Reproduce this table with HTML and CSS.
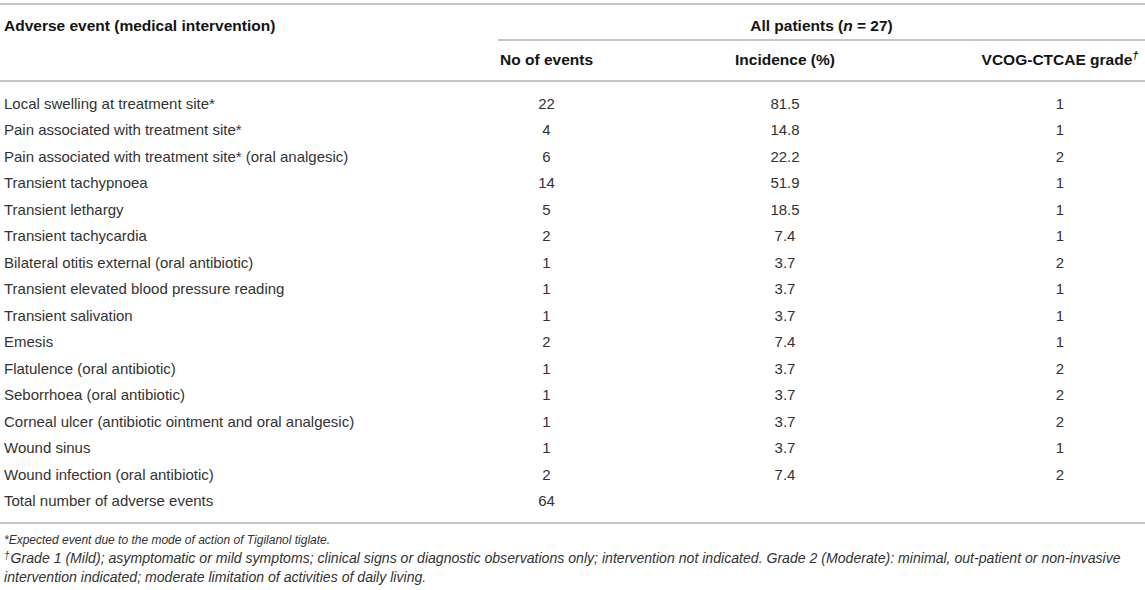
FILE: index.html
```html
<!DOCTYPE html>
<html lang="en">
<head>
<meta charset="utf-8">
<title>Adverse events</title>
<link rel="stylesheet" href="styles.css">
</head>
<body>
<div class="wrap">
<table class="ae">
  <colgroup>
    <col class="c1"><col class="c2"><col class="c3"><col class="c4">
  </colgroup>
  <thead>
    <tr>
      <th class="h-first" rowspan="2">Adverse event (medical intervention)</th>
      <th class="h-group" colspan="3">All patients (<i>n</i> = 27)</th>
    </tr>
    <tr class="h-sub">
      <th>No of events</th>
      <th>Incidence (%)</th>
      <th>VCOG-CTCAE grade<sup class="dag">†</sup></th>
    </tr>
  </thead>
  <tbody>
    <tr><td>Local swelling at treatment site*</td><td>22</td><td>81.5</td><td>1</td></tr>
    <tr><td>Pain associated with treatment site*</td><td>4</td><td>14.8</td><td>1</td></tr>
    <tr><td>Pain associated with treatment site* (oral analgesic)</td><td>6</td><td>22.2</td><td>2</td></tr>
    <tr><td>Transient tachypnoea</td><td>14</td><td>51.9</td><td>1</td></tr>
    <tr><td>Transient lethargy</td><td>5</td><td>18.5</td><td>1</td></tr>
    <tr><td>Transient tachycardia</td><td>2</td><td>7.4</td><td>1</td></tr>
    <tr><td>Bilateral otitis external (oral antibiotic)</td><td>1</td><td>3.7</td><td>2</td></tr>
    <tr><td>Transient elevated blood pressure reading</td><td>1</td><td>3.7</td><td>1</td></tr>
    <tr><td>Transient salivation</td><td>1</td><td>3.7</td><td>1</td></tr>
    <tr><td>Emesis</td><td>2</td><td>7.4</td><td>1</td></tr>
    <tr><td>Flatulence (oral antibiotic)</td><td>1</td><td>3.7</td><td>2</td></tr>
    <tr><td>Seborrhoea (oral antibiotic)</td><td>1</td><td>3.7</td><td>2</td></tr>
    <tr><td>Corneal ulcer (antibiotic ointment and oral analgesic)</td><td>1</td><td>3.7</td><td>2</td></tr>
    <tr><td>Wound sinus</td><td>1</td><td>3.7</td><td>1</td></tr>
    <tr><td>Wound infection (oral antibiotic)</td><td>2</td><td>7.4</td><td>2</td></tr>
    <tr><td>Total number of adverse events</td><td>64</td><td></td><td></td></tr>
  </tbody>
</table>
<div class="notes">
  <p class="n1">*Expected event due to the mode of action of Tigilanol tiglate.</p>
  <p class="n2"><sup class="fdag">†</sup>Grade 1 (Mild); asymptomatic or mild symptoms; clinical signs or diagnostic observations only; intervention not indicated. Grade 2 (Moderate): minimal, out-patient or non-invasive intervention indicated; moderate limitation of activities of daily living.</p>
</div>
</div>
</body>
</html>
```

FILE: styles.css
```css
html, body {
  margin: 0;
  padding: 0;
  background: #ffffff;
}

body {
  font-family: "Liberation Sans", Arial, Helvetica, sans-serif;
  color: #333333;
}

.wrap {
  width: 1145px;
  padding-top: 3px;
}

.ae {
  width: 1145px;
  border-collapse: separate;
  border-spacing: 0;
  table-layout: fixed;
  font-size: 15px;
}

.c1 { width: 498px; }
.c2 { width: 97px; }
.c3 { width: 380px; }
.c4 { width: 170px; }

.ae th {
  font-weight: bold;
  font-size: 15.5px;
  color: #141414;
  line-height: 18px;
  text-align: center;
  padding: 0;
  white-space: nowrap;
}

.ae .h-first {
  text-align: left;
  vertical-align: top;
  padding: 12px 0 0 4px;
  border-top: 2px solid #c6c6c6;
  border-bottom: 2px solid #c6c6c6;
}

.ae .h-group {
  padding: 12px 0 4px 0;
  border-top: 2px solid #c6c6c6;
  border-bottom: 2px solid #c6c6c6;
}

.ae .h-sub th {
  padding: 10px 0 11px 0;
  border-bottom: 2px solid #c6c6c6;
}

.dag {
  font-style: italic;
  font-size: 11px;
  line-height: 0;
  vertical-align: 6px;
}

.ae td {
  line-height: 26.47px;
  padding: 0;
  text-align: center;
  white-space: nowrap;
}

.ae td:first-child {
  text-align: left;
  padding-left: 4px;
}

.ae tbody tr:first-child td {
  padding-top: 9px;
}

.ae tbody tr:last-child td {
  padding-bottom: 7px;
  border-bottom: 2px solid #c6c6c6;
}

.notes {
  margin-top: 8px;
  padding-left: 4px;
  width: 1125px;
  font-style: italic;
  color: #333333;
}

.notes p {
  margin: 0;
}

.notes .n1 {
  font-size: 12px;
  line-height: 16px;
}

.notes .n2 {
  font-size: 14.1px;
  line-height: 19px;
  padding-top: 1px;
}

.fdag {
  font-size: 10px;
  line-height: 0;
  vertical-align: 4px;
  margin-right: 1px;
}
```
